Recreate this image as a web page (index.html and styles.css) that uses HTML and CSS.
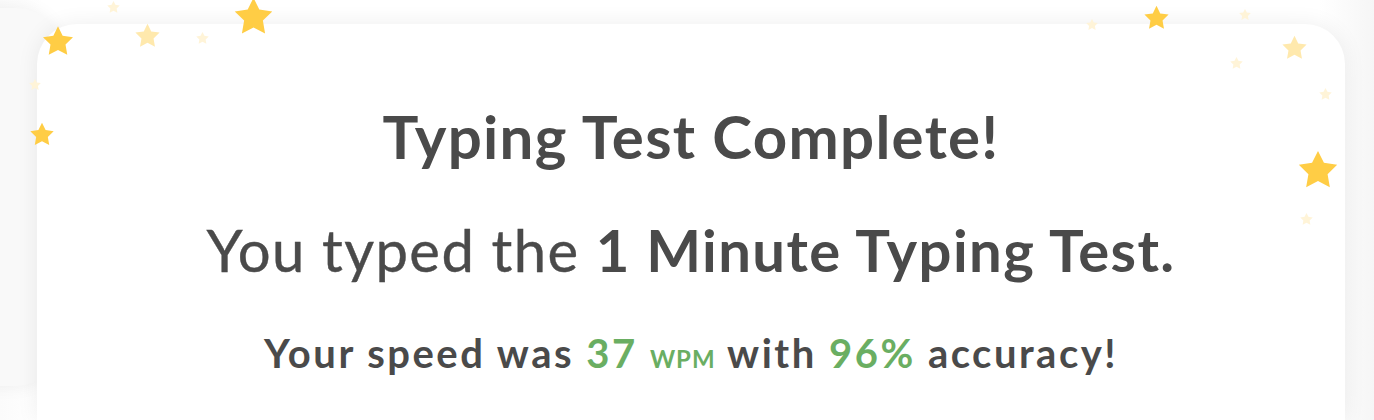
FILE: index.html
```html
<!DOCTYPE html>
<html lang="en">
<head>
<meta charset="utf-8">
<title>Typing Test Complete</title>
<link rel="stylesheet" href="styles.css">
</head>
<body>
<div class="stage">
  <div class="backdrop"></div>
  <section class="card">
    <h1 class="title">Typing Test Complete!</h1>
    <p class="typed">You typed the <strong>1 Minute Typing Test.</strong></p>
    <p class="result">Your speed was <span class="good">37 <span class="unit">WPM</span></span> with <span class="good">96%</span> accuracy!</p>
  </section>
  <div class="stars">
    <svg class="star bright" style="left:40px;top:24px;width:36px;height:36px" viewBox="0 0 24 24"><path d="M12 1.5l3.09 6.26 6.91 1.01-5 4.87 1.18 6.88L12 17.27l-6.18 3.25L7 13.64 2 8.77l6.91-1.01z"/></svg>
    <svg class="star faint" style="left:106px;top:0px;width:15px;height:15px" viewBox="0 0 24 24"><path d="M12 1.5l3.09 6.26 6.91 1.01-5 4.87 1.18 6.88L12 17.27l-6.18 3.25L7 13.64 2 8.77l6.91-1.01z"/></svg>
    <svg class="star light" style="left:133px;top:22px;width:29px;height:29px" viewBox="0 0 24 24"><path d="M12 1.5l3.09 6.26 6.91 1.01-5 4.87 1.18 6.88L12 17.27l-6.18 3.25L7 13.64 2 8.77l6.91-1.01z"/></svg>
    <svg class="star faint" style="left:195px;top:31px;width:15px;height:15px" viewBox="0 0 24 24"><path d="M12 1.5l3.09 6.26 6.91 1.01-5 4.87 1.18 6.88L12 17.27l-6.18 3.25L7 13.64 2 8.77l6.91-1.01z"/></svg>
    <svg class="star bright" style="left:231px;top:-5px;width:45px;height:45px" viewBox="0 0 24 24"><path d="M12 1.5l3.09 6.26 6.91 1.01-5 4.87 1.18 6.88L12 17.27l-6.18 3.25L7 13.64 2 8.77l6.91-1.01z"/></svg>
    <svg class="star faint" style="left:28px;top:78px;width:14px;height:14px" viewBox="0 0 24 24"><path d="M12 1.5l3.09 6.26 6.91 1.01-5 4.87 1.18 6.88L12 17.27l-6.18 3.25L7 13.64 2 8.77l6.91-1.01z"/></svg>
    <svg class="star bright" style="left:28px;top:121px;width:28px;height:28px" viewBox="0 0 24 24"><path d="M12 1.5l3.09 6.26 6.91 1.01-5 4.87 1.18 6.88L12 17.27l-6.18 3.25L7 13.64 2 8.77l6.91-1.01z"/></svg>

    <svg class="star faint" style="left:1085px;top:18px;width:14px;height:14px" viewBox="0 0 24 24"><path d="M12 1.5l3.09 6.26 6.91 1.01-5 4.87 1.18 6.88L12 17.27l-6.18 3.25L7 13.64 2 8.77l6.91-1.01z"/></svg>
    <svg class="star bright" style="left:1142px;top:4px;width:29px;height:29px" viewBox="0 0 24 24"><path d="M12 1.5l3.09 6.26 6.91 1.01-5 4.87 1.18 6.88L12 17.27l-6.18 3.25L7 13.64 2 8.77l6.91-1.01z"/></svg>
    <svg class="star faint" style="left:1238px;top:8px;width:14px;height:14px" viewBox="0 0 24 24"><path d="M12 1.5l3.09 6.26 6.91 1.01-5 4.87 1.18 6.88L12 17.27l-6.18 3.25L7 13.64 2 8.77l6.91-1.01z"/></svg>
    <svg class="star faint" style="left:1229px;top:56px;width:15px;height:15px" viewBox="0 0 24 24"><path d="M12 1.5l3.09 6.26 6.91 1.01-5 4.87 1.18 6.88L12 17.27l-6.18 3.25L7 13.64 2 8.77l6.91-1.01z"/></svg>
    <svg class="star light" style="left:1280px;top:34px;width:29px;height:29px" viewBox="0 0 24 24"><path d="M12 1.5l3.09 6.26 6.91 1.01-5 4.87 1.18 6.88L12 17.27l-6.18 3.25L7 13.64 2 8.77l6.91-1.01z"/></svg>
    <svg class="star faint" style="left:1318px;top:87px;width:15px;height:15px" viewBox="0 0 24 24"><path d="M12 1.5l3.09 6.26 6.91 1.01-5 4.87 1.18 6.88L12 17.27l-6.18 3.25L7 13.64 2 8.77l6.91-1.01z"/></svg>
    <svg class="star bright" style="left:1295px;top:148px;width:46px;height:46px" viewBox="0 0 24 24"><path d="M12 1.5l3.09 6.26 6.91 1.01-5 4.87 1.18 6.88L12 17.27l-6.18 3.25L7 13.64 2 8.77l6.91-1.01z"/></svg>
    <svg class="star faint" style="left:1299px;top:212px;width:15px;height:15px" viewBox="0 0 24 24"><path d="M12 1.5l3.09 6.26 6.91 1.01-5 4.87 1.18 6.88L12 17.27l-6.18 3.25L7 13.64 2 8.77l6.91-1.01z"/></svg>
  </div>
</div>
</body>
</html>
```

FILE: styles.css
```css
html, body {
  margin: 0;
  padding: 0;
  background: #ffffff;
  overflow: hidden;
}

.stage {
  position: relative;
  width: 1374px;
  height: 420px;
  padding: 24px 29px 0 37px;
  box-sizing: border-box;
  background: linear-gradient(90deg, #fbfbfb 0%, #ffffff 3%, #ffffff 96%, #f6f6f6 100%);
  overflow: hidden;
}

.backdrop {
  position: absolute;
  left: -60px;
  top: 8px;
  width: 120px;
  height: 378px;
  border-radius: 44px;
  background: #f9f9f9;
  box-shadow: 0 0 18px rgba(0, 0, 0, 0.06);
}

.card {
  position: relative;
  height: 396px;
  background: #ffffff;
  border-radius: 40px 40px 0 0;
  box-shadow: 0 0 22px rgba(0, 0, 0, 0.07);
  padding-top: 76px;
  box-sizing: border-box;
  text-align: center;
  color: #4a4a4a;
  font-family: "Lato", "Open Sans", sans-serif;
}

.title {
  margin: 0;
  font-size: 60px;
  line-height: 1.2;
  font-weight: 700;
  letter-spacing: 1.3px;
}

.typed {
  margin: 43px 0 0;
  font-size: 58px;
  line-height: 1.2;
  font-weight: 400;
  letter-spacing: 1.4px;
  -webkit-text-stroke: 0.4px #4a4a4a;
}

.typed strong {
  font-weight: 700;
  -webkit-text-stroke: 0;
}

.result {
  margin: 44px 0 0;
  font-size: 40px;
  line-height: 1.2;
  font-weight: 700;
  letter-spacing: 2.5px;
}

.good {
  color: #6aae62;
}

.unit {
  font-size: 24px;
  letter-spacing: 1px;
}

.stars {
  position: absolute;
  inset: 0;
  pointer-events: none;
}

.star {
  position: absolute;
  display: block;
}

.star.bright { fill: #ffcd45; }
.star.light { fill: #ffe9ad; }
.star.faint { fill: #fff4d8; }
```
